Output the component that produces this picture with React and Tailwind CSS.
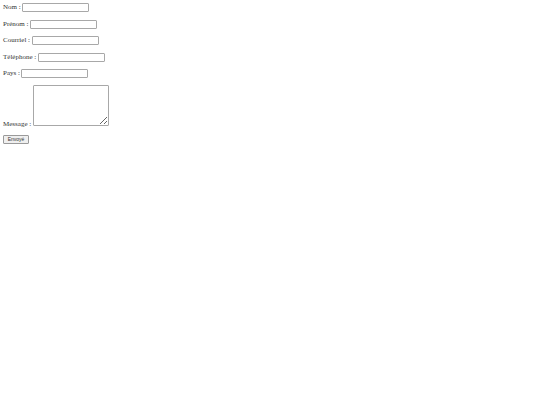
export default function App() {
  const fields = ["Nom", "Prénom", "Courriel", "Téléphone", "Pays"];

  return (
    <div className="min-h-[405px] w-[540px] bg-white text-[#333] font-['Liberation_Serif',serif] text-[7px] leading-[9px]">
      <form className="flex flex-col pl-[3px] pt-[3px]" onSubmit={(e) => e.preventDefault()}>
        {fields.map((f) => (
          <div key={f} className="flex items-center gap-[1.5px] h-[9px] mb-[7.5px]">
            <label>{f} :</label>
            <input
              type="text"
              className="w-[67px] h-[9px] border border-[#a8a8a8] rounded-[1px] bg-white"
            />
          </div>
        ))}

        {/* Message */}
        <div className="flex items-end gap-[1.5px] mt-[-0.5px]">
          <label className="leading-[4px]">Message :</label>
          <textarea className="w-[76px] h-[41px] border border-[#a8a8a8] rounded-[1px] bg-white block" />
        </div>

        <div className="mt-[9px]">
          <button
            type="submit"
            className="h-[9px] w-[26px] border border-[#9a9a9a] rounded-[1px] bg-[#efefef] font-['Liberation_Sans',sans-serif] text-[5px] leading-[7px]"
          >
            Envoyé
          </button>
        </div>
      </form>
    </div>
  );
}
